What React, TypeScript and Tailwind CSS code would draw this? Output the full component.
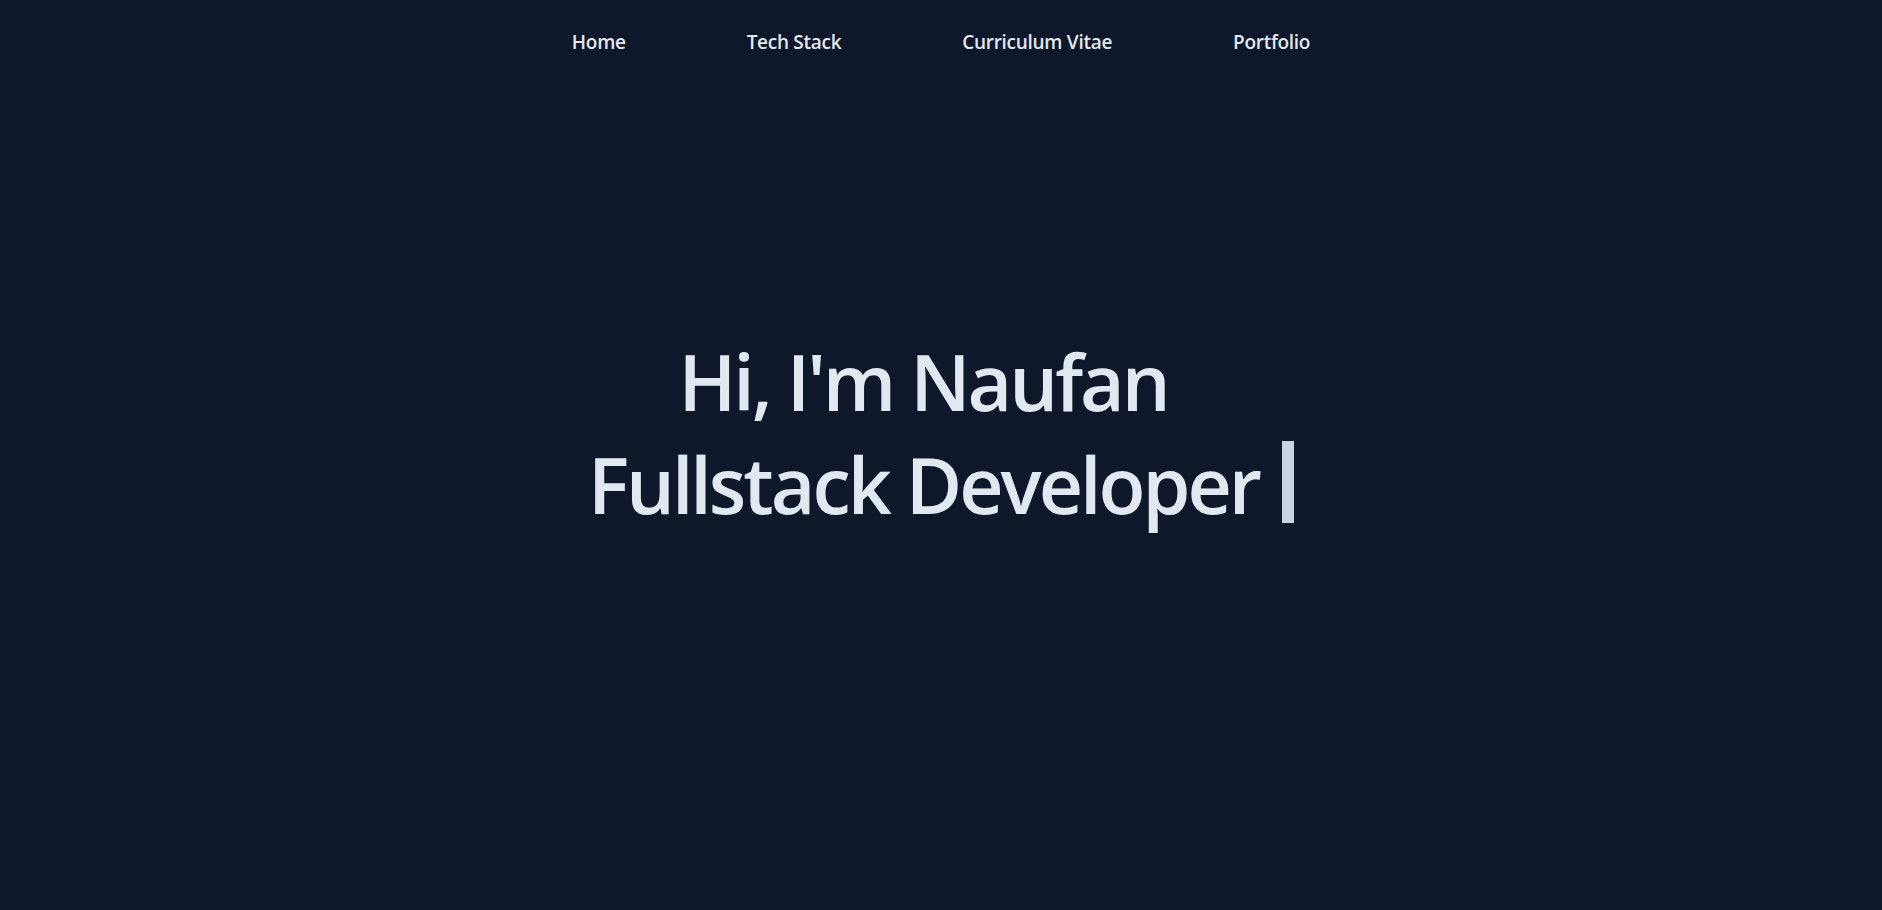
export default function App() {
    const navLinks = ["Home", "Tech Stack", "Curriculum Vitae", "Portfolio"];

    return (
        <div className="min-h-screen w-full bg-[#0f172a] font-['Open_Sans',sans-serif] text-slate-200">
            {/* Nav */}
            <nav className="flex h-[84px] items-center justify-center gap-[121px]">
                {navLinks.map((link) => (
                    <a
                        key={link}
                        href="#"
                        className="text-[19px] font-semibold leading-none tracking-[-0.015em] text-slate-200"
                    >
                        {link}
                    </a>
                ))}
            </nav>

            {/* Hero */}
            <main className="flex flex-col items-center pt-[248px]">
                <h1 className="text-center text-[77px] font-semibold leading-[100px] tracking-[-0.039em] text-slate-200">
                    <span className="block pr-[36px]">Hi, I'm Naufan</span>
                    <span className="block">
                        Fullstack Developer{" "}
                        <span className="ml-[6px] inline-block h-[82px] w-[12px] translate-y-[9px] bg-slate-300 align-baseline" />
                    </span>
                </h1>
            </main>
        </div>
    );
}
